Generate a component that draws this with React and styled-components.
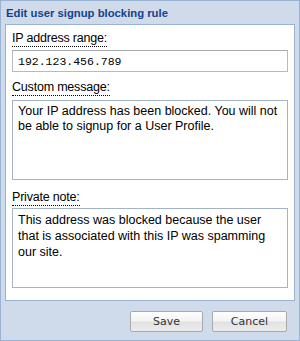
import React, { useState } from "react";
import styled, { createGlobalStyle } from "styled-components";

const GlobalStyle = createGlobalStyle`
  html, body {
    margin: 0;
    padding: 0;
    background: #fff;
  }
  * {
    box-sizing: border-box;
  }
`;

const App = () => {
  const [ip, setIp] = useState("192.123.456.789");
  const [message, setMessage] = useState(
    "Your IP address has been blocked. You will not be able to signup for a User Profile."
  );
  const [note, setNote] = useState(
    "This address was blocked because the user that is associated with this IP was spamming our site."
  );

  return (
    <>
      <GlobalStyle />
      <Window>
        <Title>Edit user signup blocking rule</Title>
        <Panel>
          <Label>IP address range:</Label>
          <Input type="text" value={ip} onChange={(e) => setIp(e.target.value)} />

          <Label $top={7}>Custom message:</Label>
          <TextArea
            $top={4}
            value={message}
            onChange={(e) => setMessage(e.target.value)}
          />

          <Label $top={9}>Private note:</Label>
          <TextArea
            $top={2}
            $lineHeight={16}
            value={note}
            onChange={(e) => setNote(e.target.value)}
          />
        </Panel>
        <ButtonBar>
          <Button $width={73}>Save</Button>
          <Button $width={75}>Cancel</Button>
        </ButtonBar>
      </Window>
    </>
  );
};

const Window = styled.div`
  width: 300px;
  height: 341px;
  display: flex;
  flex-direction: column;
  border: 1px solid #99b3d3;
  background-color: #cfdbea;
  padding: 0 4px;
  font-family: "Liberation Sans", Arial, sans-serif;
`;

const Title = styled.div`
  height: 23px;
  line-height: 24px;
  padding-left: 1px;
  font-size: 11.3px;
  font-weight: bold;
  color: #15428b;
  font-family: "Liberation Sans", Tahoma, sans-serif;
`;

const Panel = styled.div`
  height: 277px;
  display: flex;
  flex-direction: column;
  align-items: flex-start;
  background-color: #fff;
  border: 1px solid #99b3d3;
  padding: 5px 6px 0 6px;
`;

const Label = styled.label`
  display: inline-block;
  margin-top: ${(p) => p.$top || 0}px;
  height: 17px;
  line-height: 17px;
  font-size: 12.5px;
  letter-spacing: -0.2px;
  color: #000;
  border-bottom: 1px dotted #000;
`;

const Input = styled.input`
  width: 100%;
  height: 22px;
  margin-top: 3px;
  padding: 0 5px;
  border: 1px solid #b5b8c8;
  border-top-color: #a5a8b5;
  outline: none;
  font-family: "Liberation Mono", "Courier New", monospace;
  font-size: 11.5px;
  color: #000;
  background: #fff;
`;

const TextArea = styled.textarea`
  width: 100%;
  height: 80px;
  margin-top: ${(p) => p.$top || 0}px;
  padding: 3px 5px;
  border: 1px solid #a3b4c6;
  outline: none;
  resize: none;
  overflow: hidden;
  font-family: "Liberation Sans", Arial, sans-serif;
  font-size: 12.5px;
  line-height: ${(p) => p.$lineHeight || 15}px;
  color: #000;
  background: #fff;
`;

const ButtonBar = styled.div`
  display: flex;
  justify-content: flex-end;
  gap: 9px;
  padding: 10px 8px 0 0;
`;

const Button = styled.button`
  width: ${(p) => p.$width}px;
  height: 21px;
  padding: 0;
  border: 1px solid #a9a9a9;
  border-radius: 2px;
  background: linear-gradient(#ffffff 0%, #f3f3f3 45%, #e2e2e2 55%, #ececec 100%);
  font-family: "DejaVu Sans", Tahoma, sans-serif;
  font-size: 11px;
  color: #333;
  cursor: pointer;
`;

export default App;
